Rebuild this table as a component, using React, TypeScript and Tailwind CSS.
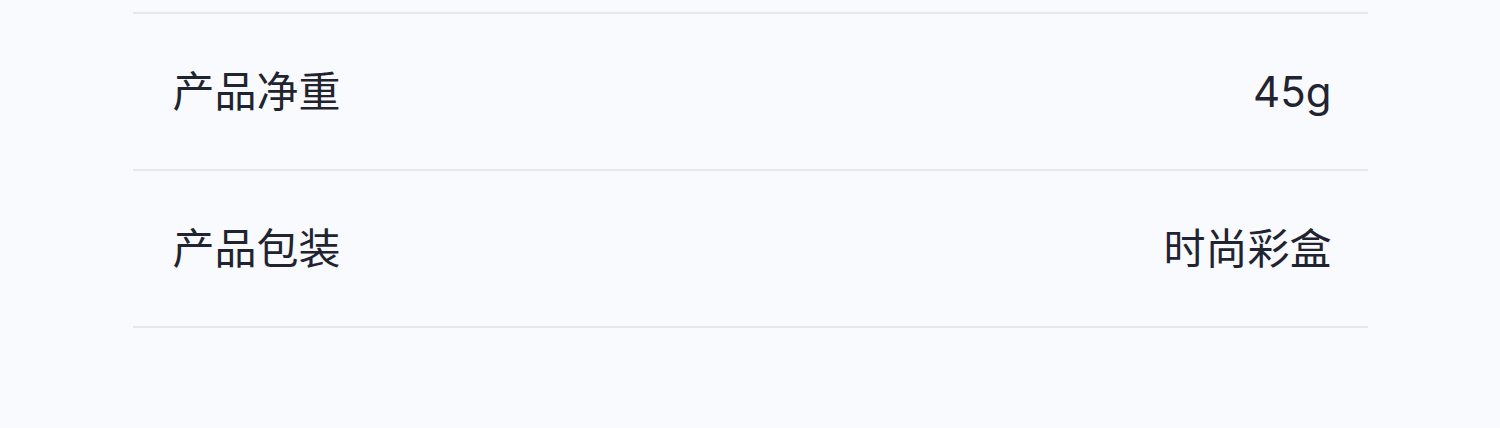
const rows = [
  { label: "产品净重", value: "45g" },
  { label: "产品包装", value: "时尚彩盒" },
];

export default function App() {
  return (
    <div className="min-h-[428px] w-full bg-[#f9fafe] pt-[12px] font-['Inter','Noto_Sans_CJK_SC',sans-serif]">
      <div className="mx-auto w-[1235px] border-t-2 border-[#e4e7ed]">
        {rows.map((row) => (
          <div
            key={row.label}
            className="flex h-[157px] items-center justify-between border-b-2 border-[#e4e7ed] pl-[40px] pr-[36px] text-[42px] text-[#1f2430]"
          >
            <span>{row.label}</span>
            <span>{row.value}</span>
          </div>
        ))}
      </div>
    </div>
  );
}
